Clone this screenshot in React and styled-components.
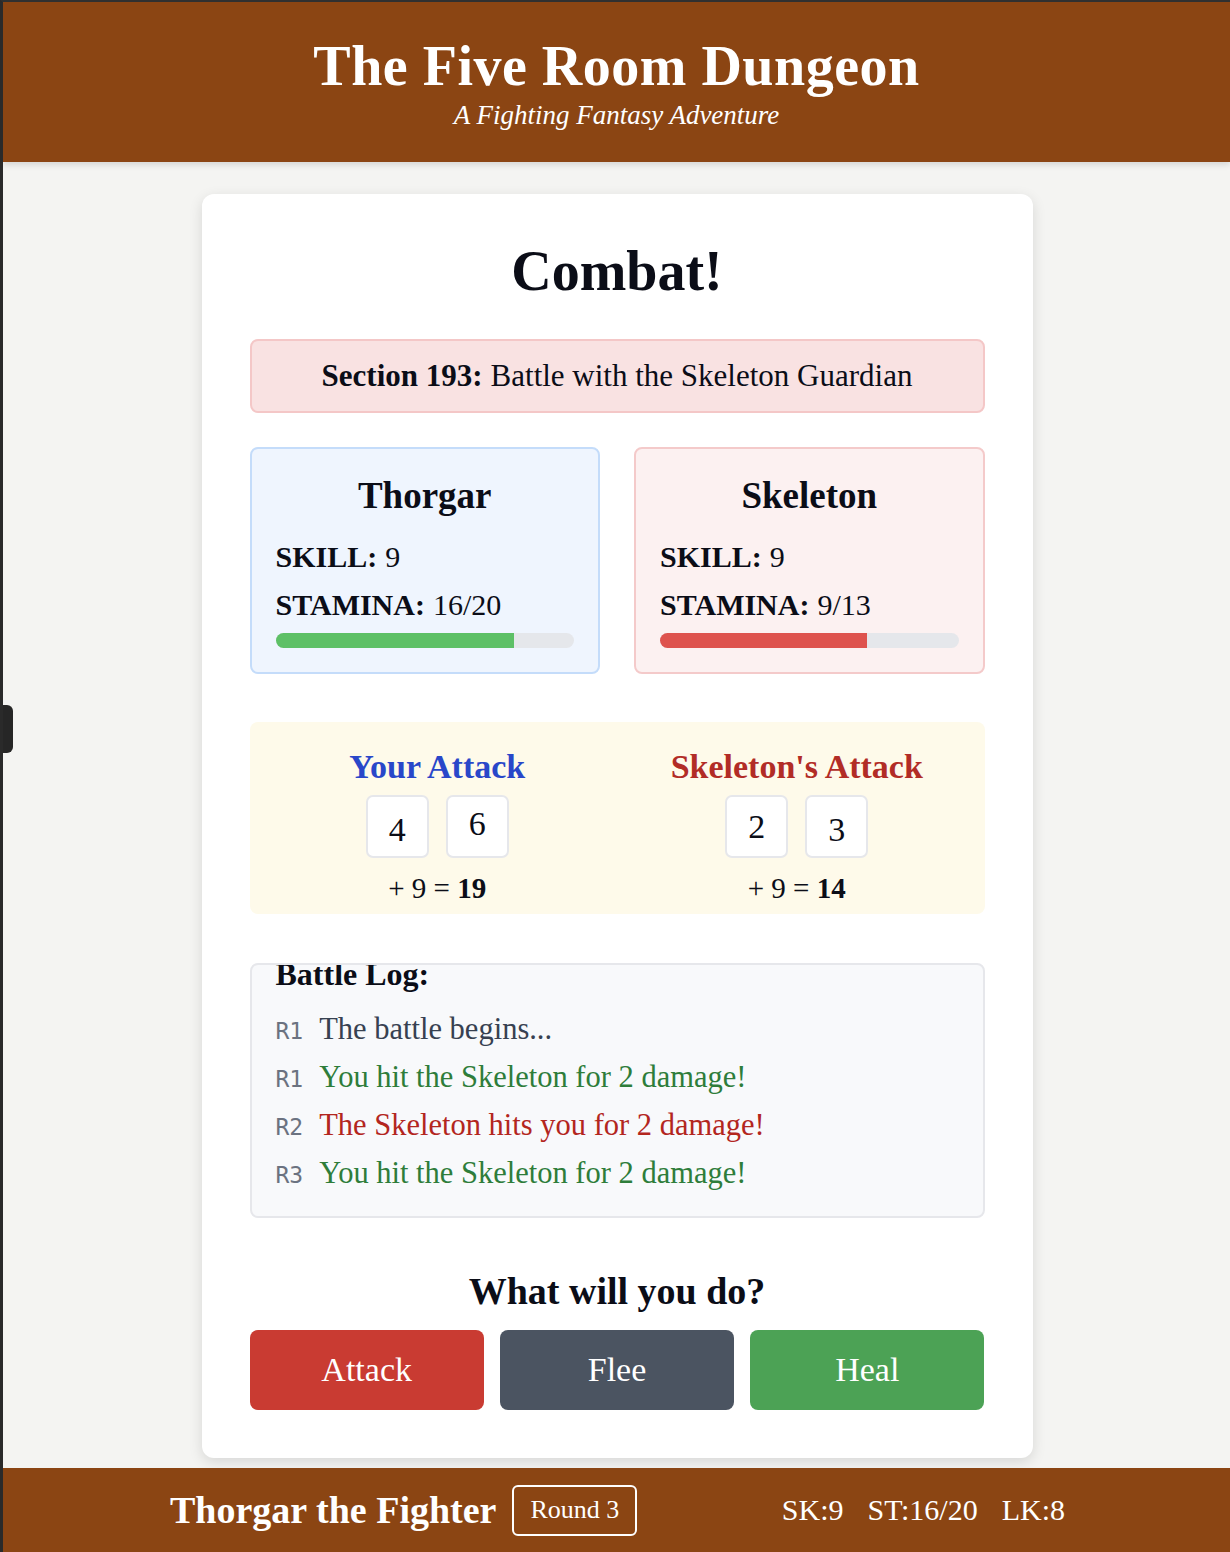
import React from "react";
import styled, { createGlobalStyle } from "styled-components";

const Global = createGlobalStyle`
  html, body { margin: 0; padding: 0; }
  body {
    background: #f4f4f2;
    font-family: "Liberation Serif", "Times New Roman", serif;
    color: #0b0d17;
    border-top: 2px solid #303030;
    border-left: 3px solid #2a2a2a;
  }
  * { box-sizing: border-box; }
`;

const Page = styled.div`
  display: flex;
  flex-direction: column;
  min-height: 1550px;
  position: relative;
`;

const SideTab = styled.div`
  position: absolute;
  left: -3px;
  top: 703px;
  width: 13px;
  height: 48px;
  background: #262626;
  border-radius: 0 6px 6px 0;
`;

const Header = styled.header`
  background: #8b4513;
  height: 160px;
  display: flex;
  flex-direction: column;
  align-items: center;
  justify-content: center;
  color: #fff;
  box-shadow: 0 3px 6px rgba(0, 0, 0, 0.12);
  position: relative;
  z-index: 1;
`;

const Title = styled.h1`
  margin: 2px 0 0;
  font-size: 56px;
  font-weight: 700;
  line-height: 1;
  letter-spacing: 0.5px;
`;

const Subtitle = styled.div`
  margin-top: 8px;
  font-style: italic;
  font-size: 27px;
  line-height: 1;
`;

const Main = styled.main`
  flex: 1;
  padding: 32px 0 10px 1px;
  display: flex;
  justify-content: center;
`;

const Card = styled.section`
  width: 831px;
  background: #fff;
  border-radius: 12px;
  box-shadow: 0 4px 14px rgba(0, 0, 0, 0.12);
  padding: 49px 48px 48px;
  display: flex;
  flex-direction: column;
`;

const CombatTitle = styled.h2`
  margin: 0;
  text-align: center;
  font-size: 56px;
  font-weight: 700;
  line-height: 56px;
`;

const SectionBox = styled.div`
  margin-top: 40px;
  height: 74px;
  background: #f9e2e2;
  border: 2px solid #f4c7c7;
  border-radius: 8px;
  display: flex;
  align-items: center;
  justify-content: center;
  font-size: 31px;
  b { font-weight: 700; margin-right: 8px; }
`;

const Fighters = styled.div`
  margin-top: 34px;
  display: grid;
  grid-template-columns: 1fr 1fr;
  gap: 34px;
`;

const FighterCard = styled.div`
  height: 227px;
  border-radius: 8px;
  border: 2px solid ${(p) => (p.$enemy ? "#f4caca" : "#c4dcfa")};
  background: ${(p) => (p.$enemy ? "#fcf1f1" : "#eff5fe")};
  padding: 25px 24px 0;
  display: flex;
  flex-direction: column;
`;

const FighterName = styled.h3`
  margin: 0;
  text-align: center;
  font-size: 37px;
  font-weight: 700;
  line-height: 44px;
`;

const StatLine = styled.div`
  font-size: 30px;
  line-height: 34px;
  margin-top: ${(p) => p.$mt}px;
  b { font-weight: 700; margin-right: 8px; }
`;

const Bar = styled.div`
  margin-top: 11px;
  height: 15px;
  border-radius: 8px;
  background: #e5e7eb;
  overflow: hidden;
`;

const BarFill = styled.div`
  height: 100%;
  background: ${(p) => p.$color};
`;

const AttackPanel = styled.div`
  margin-top: 48px;
  height: 192px;
  background: #fefaea;
  border-radius: 8px;
  padding: 27px 24px 0;
  display: grid;
  grid-template-columns: 1fr 1fr;
  gap: 32px;
`;

const AttackCol = styled.div`
  display: flex;
  flex-direction: column;
  align-items: center;
`;

const AttackHead = styled.div`
  font-size: 34px;
  font-weight: 700;
  line-height: 36px;
  color: ${(p) => p.$color};
`;

const DiceRow = styled.div`
  margin-top: 10px;
  display: flex;
  gap: 17px;
`;

const Die = styled.div`
  width: 63px;
  height: 63px;
  background: #fff;
  border: 2px solid #e6e7eb;
  border-radius: 7px;
  display: flex;
  align-items: center;
  justify-content: center;
  font-size: 34px;
  padding-top: ${(p) => (p.$low ? 6 : 0)}px;
  padding-bottom: ${(p) => (p.$high ? 6 : 0)}px;
`;

const Total = styled.div`
  margin-top: 13px;
  font-size: 29px;
  line-height: 34px;
  b { font-weight: 700; }
`;

const Log = styled.div`
  margin-top: 49px;
  height: 255px;
  background: #f8f9fb;
  border: 2px solid #e6e7eb;
  border-radius: 8px;
  padding: 0 24px;
  overflow: hidden;
`;

const LogTitle = styled.h4`
  margin: -8px 0 0;
  font-size: 32px;
  font-weight: 700;
  line-height: 34px;
`;

const LogList = styled.ul`
  list-style: none;
  margin: 21px 0 0;
  padding: 0;
  display: flex;
  flex-direction: column;
  gap: 14px;
`;

const LogItem = styled.li`
  height: 34px;
  display: flex;
  align-items: baseline;
  gap: 16px;
  font-size: 30.5px;
  line-height: 34px;
  color: ${(p) => p.$color};
`;

const LogRound = styled.span`
  font-family: "DejaVu Sans Mono", "Liberation Mono", monospace;
  font-size: 23px;
  line-height: 34px;
  color: #6b7280;
`;

const Prompt = styled.h3`
  margin: 52px 0 0;
  text-align: center;
  font-size: 38px;
  font-weight: 700;
  line-height: 42px;
`;

const Actions = styled.div`
  margin-top: 18px;
  display: grid;
  grid-template-columns: repeat(3, 1fr);
  gap: 16px;
`;

const ActionButton = styled.button`
  height: 80px;
  border: none;
  border-radius: 8px;
  background: ${(p) => p.$bg};
  color: #fff;
  font-family: inherit;
  font-size: 34px;
  cursor: pointer;
`;

const Footer = styled.footer`
  height: 84px;
  background: #8b4513;
  color: #fff;
  display: flex;
  justify-content: center;
`;

const FooterInner = styled.div`
  width: 895px;
  margin-left: 2px;
  display: flex;
  align-items: center;
  justify-content: space-between;
`;

const FooterLeft = styled.div`
  display: flex;
  align-items: center;
  gap: 16px;
`;

const Hero = styled.div`
  font-size: 38px;
  font-weight: 700;
`;

const RoundBadge = styled.div`
  border: 2px solid #fff;
  border-radius: 6px;
  height: 51px;
  padding: 0 16px;
  display: flex;
  align-items: center;
  font-size: 26px;
`;

const Stats = styled.div`
  display: flex;
  gap: 24px;
  font-size: 30px;
`;

const log = [
  { r: "R1", text: "The battle begins...", color: "#374151" },
  { r: "R1", text: "You hit the Skeleton for 2 damage!", color: "#2e7d3a" },
  { r: "R2", text: "The Skeleton hits you for 2 damage!", color: "#b3261e" },
  { r: "R3", text: "You hit the Skeleton for 2 damage!", color: "#2e7d3a" },
];

export default function App() {
  return (
    <>
      <Global />
      <Page>
        <SideTab />
        <Header>
          <Title>The Five Room Dungeon</Title>
          <Subtitle>A Fighting Fantasy Adventure</Subtitle>
        </Header>
        <Main>
          <Card>
            <CombatTitle>Combat!</CombatTitle>
            <SectionBox>
              <b>Section 193:</b> Battle with the Skeleton Guardian
            </SectionBox>
            <Fighters>
              <FighterCard>
                <FighterName>Thorgar</FighterName>
                <StatLine $mt={22}><b>SKILL:</b>9</StatLine>
                <StatLine $mt={14}><b>STAMINA:</b>16/20</StatLine>
                <Bar><BarFill $color="#5dc066" style={{ width: `${(16 / 20) * 100}%` }} /></Bar>
              </FighterCard>
              <FighterCard $enemy>
                <FighterName>Skeleton</FighterName>
                <StatLine $mt={22}><b>SKILL:</b>9</StatLine>
                <StatLine $mt={14}><b>STAMINA:</b>9/13</StatLine>
                <Bar><BarFill $color="#de534e" style={{ width: `${(9 / 13) * 100}%` }} /></Bar>
              </FighterCard>
            </Fighters>
            <AttackPanel>
              <AttackCol>
                <AttackHead $color="#2947c9">Your Attack</AttackHead>
                <DiceRow>
                  <Die $low>4</Die>
                  <Die $high>6</Die>
                </DiceRow>
                <Total>+ 9 = <b>19</b></Total>
              </AttackCol>
              <AttackCol>
                <AttackHead $color="#b22c26">Skeleton's Attack</AttackHead>
                <DiceRow>
                  <Die>2</Die>
                  <Die $low>3</Die>
                </DiceRow>
                <Total>+ 9 = <b>14</b></Total>
              </AttackCol>
            </AttackPanel>
            <Log>
              <LogTitle>Battle Log:</LogTitle>
              <LogList>
                {log.map((l, i) => (
                  <LogItem key={i} $color={l.color}>
                    <LogRound>{l.r}</LogRound>
                    <span>{l.text}</span>
                  </LogItem>
                ))}
              </LogList>
            </Log>
            <Prompt>What will you do?</Prompt>
            <Actions>
              <ActionButton $bg="#c93b32">Attack</ActionButton>
              <ActionButton $bg="#4b5461">Flee</ActionButton>
              <ActionButton $bg="#4ca255">Heal</ActionButton>
            </Actions>
          </Card>
        </Main>
        <Footer>
          <FooterInner>
            <FooterLeft>
              <Hero>Thorgar the Fighter</Hero>
              <RoundBadge>Round 3</RoundBadge>
            </FooterLeft>
            <Stats>
              <span>SK:9</span>
              <span>ST:16/20</span>
              <span>LK:8</span>
            </Stats>
          </FooterInner>
        </Footer>
      </Page>
    </>
  );
}
